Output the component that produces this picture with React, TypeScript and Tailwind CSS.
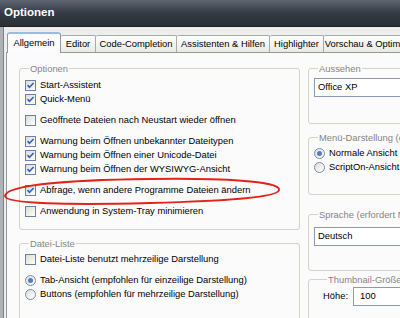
import type { ReactNode } from "react";

type Tab = { label: string; w: string; active?: boolean };

const tabs: Tab[] = [
  { label: "Allgemein", w: "w-[54px]", active: true },
  { label: "Editor", w: "w-[35px]" },
  { label: "Code-Completion", w: "w-[81px]" },
  { label: "Assistenten & Hilfen", w: "w-[93px]" },
  { label: "Highlighter", w: "w-[54px]" },
  { label: "Vorschau & Optimierung", w: "w-[104px]" },
];

function Check({ checked }: { checked?: boolean }) {
  return (
    <span className="w-[11px] h-[11px] shrink-0 border border-[#6f8299] bg-gradient-to-br from-[#dcdcd6] to-white flex items-center justify-center">
      {checked ? (
        <svg width="9" height="9" viewBox="0 0 9 9">
          <path d="M1.5 4.2 L3.5 6.3 L7.6 2" fill="none" stroke="#2f66c2" strokeWidth="1.7" />
        </svg>
      ) : null}
    </span>
  );
}

function Radio({ checked }: { checked?: boolean }) {
  return (
    <span className="w-[11px] h-[11px] shrink-0 rounded-full border border-[#7b8ca0] bg-gradient-to-br from-[#dedede] to-white flex items-center justify-center">
      {checked ? <span className="w-[5px] h-[5px] rounded-full bg-[#4f7fbc]" /> : null}
    </span>
  );
}

function Row({ kind = "check", checked, children }: { kind?: "check" | "radio"; checked?: boolean; children: ReactNode }) {
  return (
    <div className="flex items-center h-[14px] gap-[4px] whitespace-nowrap">
      {kind === "check" ? <Check checked={checked} /> : <Radio checked={checked} />}
      <span>{children}</span>
    </div>
  );
}

function Group({ title, className, children }: { title: string; className?: string; children: ReactNode }) {
  return (
    <fieldset className={`border border-[#d3d3c8] rounded-[3px] min-w-0 ${className ?? ""}`}>
      <legend className="ml-[4px] px-[1px] leading-[11px] text-[#858585] whitespace-nowrap">{title}</legend>
      {children}
    </fieldset>
  );
}

function Combo({ value }: { value: string }) {
  return (
    <div className="h-[19px] border border-[#8a9bb0] bg-white flex items-center pl-[3px] whitespace-nowrap">{value}</div>
  );
}

export default function App() {
  return (
    <div className="relative w-[400px] h-[318px] overflow-hidden bg-[#ededeb] font-['Liberation_Sans',Arial,sans-serif] text-[9.4px] text-black">
      <div className="h-[27px] flex items-center pl-[4px] bg-gradient-to-b from-[#5e6672] via-[#343b45] to-[#2a3037] text-white font-bold text-[11.5px] border-b border-[#1e2227]">
        Optionen
      </div>

      <div className="flex h-[291px]">
        <div className="w-[4px] shrink-0 bg-[#aeb1b5] border-r border-[#7e8288]" />
        <div className="flex flex-col pl-[2px] pt-[5px]">
          <div className="flex items-end h-[20px] pl-[1px]">
            {tabs.map((t) =>
              t.active ? (
                <div
                  key={t.label}
                  className={`${t.w} h-[21px] -mb-px z-10 shrink-0 flex items-center justify-center bg-[#fcfcfe] border border-b-0 border-[#919b9c] border-t-2 border-t-[#9dbbe0] rounded-t-[3px] whitespace-nowrap`}
                >
                  {t.label}
                </div>
              ) : (
                <div
                  key={t.label}
                  className={`${t.w} h-[17px] shrink-0 flex items-center justify-center bg-gradient-to-b from-white to-[#e9e9e4] border border-b-0 border-l-0 border-[#a4abad] rounded-t-[2px] whitespace-nowrap`}
                >
                  {t.label}
                </div>
              ),
            )}
          </div>

          <div className="w-[480px] flex-1 border border-[#919b9c] bg-[#fbfbfc] flex gap-[8px] pl-[12px] pt-[10px]">
            <div className="w-[281px] shrink-0 flex flex-col gap-[8px]">
              <Group title="Optionen" className="pl-[5px] pt-[4px] pb-[11px]">
                <Row checked>Start-Assistent</Row>
                <Row checked>Quick-Menü</Row>
                <div className="h-[7px]" />
                <Row>Geöffnete Dateien nach Neustart wieder öffnen</Row>
                <div className="h-[7px]" />
                <Row checked>Warnung beim Öffnen unbekannter Dateitypen</Row>
                <Row checked>Warnung beim Öffnen einer Unicode-Datei</Row>
                <Row checked>Warnung beim Öffnen der WYSIWYG-Ansicht</Row>
                <div className="h-[7px]" />
                <Row checked>Abfrage, wenn andere Programme Dateien ändern</Row>
                <div className="h-[7px]" />
                <Row>Anwendung in System-Tray minimieren</Row>
              </Group>
              <Group title="Datei-Liste" className="pl-[5px] pt-[3px] pb-[40px]">
                <Row>Datei-Liste benutzt mehrzeilige Darstellung</Row>
                <div className="h-[7px]" />
                <Row kind="radio" checked>
                  Tab-Ansicht (empfohlen für einzeilige Darstellung)
                </Row>
                <Row kind="radio">Buttons (empfohlen für mehrzeilige Darstellung)</Row>
              </Group>
            </div>

            <div className="w-[170px] shrink-0 flex flex-col">
              <Group title="Aussehen" className="px-[5px] pt-[4px] pb-[26px]">
                <Combo value="Office XP" />
              </Group>
              <Group title="Menü-Darstellung (erfordert Neustart)" className="mt-[8px] pl-[5px] pt-[3px] pb-[20px]">
                <Row kind="radio" checked>
                  Normale Ansicht
                </Row>
                <Row kind="radio">ScriptOn-Ansicht</Row>
              </Group>
              <Group title="Sprache (erfordert Neustart)" className="mt-[14px] px-[5px] pt-[7px] pb-[24px]">
                <Combo value="Deutsch" />
              </Group>
              <Group title="Thumbnail-Größe (in Pixel)" className="mt-[3px] pl-[14px] pt-[2px] pb-[20px]">
                <div className="flex items-center gap-[5px]">
                  <span>Höhe:</span>
                  <div className="w-[60px] h-[19px] border border-[#8a9bb0] bg-white flex items-center pl-[6px]">100</div>
                </div>
              </Group>
            </div>
          </div>
        </div>
      </div>

      {/* hand-drawn annotation */}
      <svg className="absolute inset-0 pointer-events-none" width="400" height="318" viewBox="0 0 400 318">
        <path
          d="M5 196 C 6 186, 60 180, 150 179 C 220 178, 281 181, 279 190 C 278 198, 220 201, 150 203 C 70 205, 5 204, 5 196 Z"
          fill="none"
          stroke="#e2231a"
          strokeWidth="2"
        />
      </svg>
    </div>
  );
}
